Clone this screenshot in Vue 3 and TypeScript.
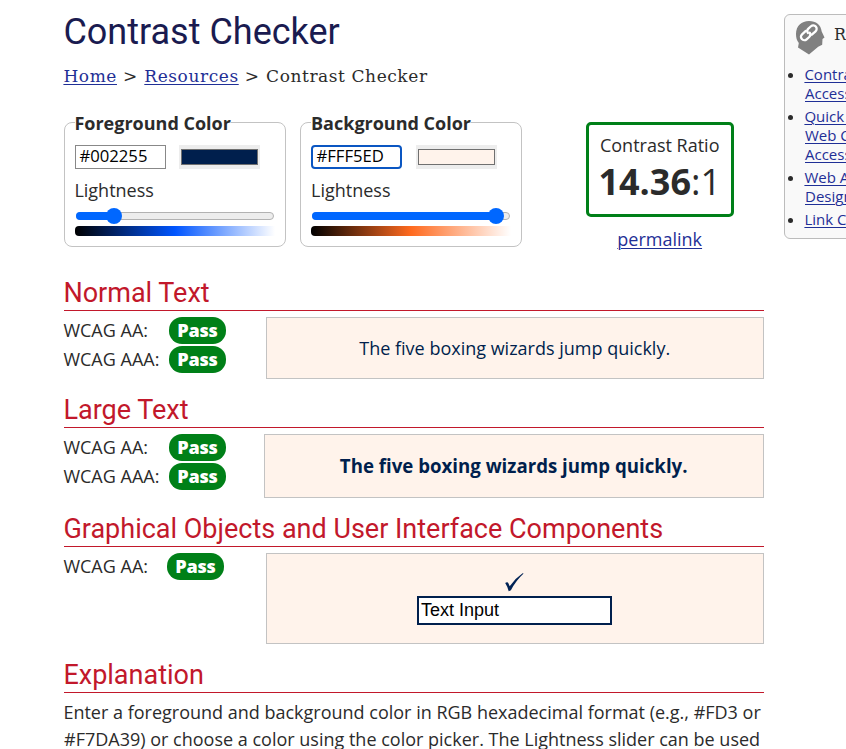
<script setup lang="ts">
import { ref } from 'vue'

interface Picker {
  id: string
  label: string
  value: string
  percent: number
}

const pickers = ref<Picker[]>([
  { id: 'fg', label: 'Foreground Color', value: '#002255', percent: 18.9 },
  { id: 'bg', label: 'Background Color', value: '#FFF5ED', percent: 93.2 },
])

const resources: string[][] = [
  ['Contrast and Color', 'Accessibility'],
  ['Quick Reference:', 'Web Content', 'Accessibility'],
  ['Web Accessibility for', 'Designers'],
  ['Link Contrast Checker'],
]
</script>

<template>
  <div class="page">
    <main>
      <h1>Contrast Checker</h1>
      <nav class="crumbs"><a href="#">Home</a><span>&gt;</span><a href="#">Resources</a><span>&gt;</span>Contrast Checker</nav>

      <div class="tools">
        <fieldset v-for="p in pickers" :key="p.id" :class="['picker', p.id]">
          <legend>{{ p.label }}</legend>
          <div class="row">
            <div class="hex">{{ p.value }}</div>
            <div class="well"><div class="swatch"></div></div>
          </div>
          <div class="light">Lightness</div>
          <div class="track">
            <div class="fill" :style="{ width: p.percent + '%' }"></div>
            <div class="thumb" :style="{ left: p.percent + '%' }"></div>
          </div>
          <div class="gradient"></div>
        </fieldset>
        <div class="result">
          <div class="ratio">
            <div class="caption">Contrast Ratio</div>
            <div class="number"><b>14.36</b>:1</div>
          </div>
          <a href="#">permalink</a>
        </div>
      </div>

      <h2>Normal Text</h2>
      <section class="normal">
        <div class="levels">
          <div><span>WCAG AA:</span><b>Pass</b></div>
          <div><span>WCAG AAA:</span><b>Pass</b></div>
        </div>
        <div class="sample">The five boxing wizards jump quickly.</div>
      </section>

      <h2>Large Text</h2>
      <section class="large">
        <div class="levels">
          <div><span>WCAG AA:</span><b>Pass</b></div>
          <div><span>WCAG AAA:</span><b>Pass</b></div>
        </div>
        <div class="sample">The five boxing wizards jump quickly.</div>
      </section>

      <h2>Graphical Objects and User Interface Components</h2>
      <section class="objects">
        <div class="levels">
          <div><span>WCAG AA:</span><b>Pass</b></div>
        </div>
        <div class="sample">
          <svg class="check" width="20" height="19" viewBox="0 0 20 19">
            <path d="M1.2 10 Q3.6 8.2 4.5 10.5 L5.7 13.2 Q11 5.5 18.6.3 L19.6.5 Q12 7.500 6.900 17.200 L4.700 18.200 Q3.400 13.400 1.200 10Z" fill="#002255" />
          </svg>
          <div class="field">Text Input</div>
        </div>
      </section>

      <h2>Explanation</h2>
      <p>Enter a foreground and background color in RGB hexadecimal format (e.g., #FD3 or<br />#F7DA39) or choose a color using the color picker. The Lightness slider can be used</p>
    </main>

    <aside>
      <div class="head">
        <svg width="30" height="36" viewBox="0 0 30 36">
          <path d="M1 14C1 6 6.500 1 14 1c7 0 12 4 12.700 10.500L29.500 17.500l-2 1.500-.3 5.800-4 2L14 34.500 3 27.500 3.800 23C1.800 20.500 1 17.500 1 14Z" fill="#808080" />
          <g transform="translate(13.800 12.800) rotate(-42)" fill="none" stroke="#fff" stroke-width="2.300" stroke-linecap="round">
            <path d="M-1-3.400H-6a3.400 3.400 0 0 0 0 6.800H-2.500A3.400 3.400 0 0 0 .8.500" />
            <path d="M1 3.400H6a3.400 3.400 0 0 0 0-6.800H2.500A3.400 3.400 0 0 0-.8-.5" />
          </g>
        </svg>
        <h3>Resources</h3>
      </div>
      <ul>
        <li v-for="(item, i) in resources" :key="i">
          <a href="#"><template v-for="(line, j) in item" :key="j"><br v-if="j" />{{ line }}</template></a>
        </li>
      </ul>
    </aside>
  </div>
</template>

<style>
body { background: #fff; overflow: hidden; }
</style>

<style scoped>
* { box-sizing: border-box; }
.page { display: flex; width: 846px; height: 749px; overflow: hidden; font: 18px/27px "Open Sans", sans-serif; color: #2b2b2b; }
a { color: #1f2f96; text-decoration: underline; text-decoration-thickness: 1px; text-underline-offset: 2px; }
main { flex: none; width: 700px; margin-left: 64px; white-space: nowrap; text-indent: -0.600px; }
h1 { margin: 10px 0 0; font: 400 36px/44px Roboto, sans-serif; color: #1a1b50; }
.crumbs { height: 24px; margin-top: 10px; font: 17px/24px "DejaVu Serif", serif; letter-spacing: 0.580px; }
.crumbs span { margin: 0 6.500px 0 6px; }
.tools { display: flex; height: 137px; margin-top: 22px; }
.picker { flex: none; width: 222px; height: 137px; margin: 0 14px 0 0; padding: 0 10px; border: 1px solid #c3c3c3; border-radius: 8px; }
legend { padding: 2px 0 0; font-weight: 700; line-height: 23px; }
.bg legend { text-indent: 0; }
.row { display: flex; gap: 13px; margin-top: 10px; }
.bg .row { gap: 14px; }
.hex { width: 91px; height: 24px; padding-left: 4px; border: 1px solid #888; font-size: 16.700px; line-height: 20px; color: #000; }
.bg .hex { border: 2px solid #0a56c2; border-radius: 4px; padding-left: 4px; line-height: 18px; }
.well { width: 81px; height: 24px; padding: 4px 2px; background: #ededed; }
.swatch { height: 16px; border: 1px solid #707070; background: #001f4d; }
.bg .swatch { background: #fff3eb; }
.light { margin-top: 8px; line-height: 27px; }
.bg .light { text-indent: 0; }
.track { position: relative; width: 198px; height: 8px; margin: 8px 0 0 1px; border: 1px solid #b2b2b2; border-radius: 4px; background: #ededed; }
.fill { height: 8px; margin: -1px; border-radius: 4px; background: #0067ff; }
.thumb { position: absolute; top: -5px; width: 16px; height: 16px; margin-left: -8px; border-radius: 50%; background: #0067ff; }
.gradient { width: 200px; height: 10px; margin-top: 6px; border-radius: 4px 0 0 4px; background: linear-gradient(90deg, #000, #0055ff 50%, #fff); }
.bg .gradient { background: linear-gradient(90deg, #000, #ff6a1f 50%, #fff); }
.result { width: 148px; margin: 12px 0 0 50px; text-align: center; }
.ratio { height: 95px; padding-top: 7px; border: 3px solid #008018; border-radius: 5px; }
.number { font-size: 36px; line-height: 46px; }
.result > a { display: block; margin-top: 9px; }
h2 { margin: 0; height: 32px; border-bottom: 1px solid #c2182b; font: 400 27px/28px Roboto, sans-serif; color: #c2182b; }
.tools + h2 { margin-top: 32px; }
section { display: flex; justify-content: space-between; margin-top: 6px; }
.levels { display: flex; flex-direction: column; gap: 2px; }
.levels > div { display: flex; height: 27px; }
.levels span { width: 105px; }
.objects .levels span { width: 103px; }
.levels b { width: 57px; border-radius: 13px; background: #008018; color: #fff; font-weight: 800; letter-spacing: -0.200px; text-align: center; text-indent: 0; }
.sample { display: flex; align-items: center; justify-content: center; width: 498px; height: 62px; border: 1px solid #c3c3c3; background: #fff3eb; color: #001f4d; }
.normal { height: 79px; }
.large { height: 81px; }
.large .sample { width: 500px; height: 64px; padding-bottom: 1px; font-weight: 700; font-size: 18.670px; }
.objects { height: 108px; }
.objects .sample { flex-direction: column; justify-content: flex-start; height: 91px; padding: 19px 2px 0 0; }
.check { flex: none; }
.field { width: 195px; height: 29px; margin-top: 4px; padding-left: 3px; border: 2px solid #001f4d; background: #fff; color: #000; font: 18px/25px "Liberation Sans", sans-serif; }
p { margin: 6px 0 0; }
aside { flex: none; width: 210px; height: 225px; margin: 14px 0 0 20px; border: 1px solid #bcbcbc; border-radius: 6px; background: #f9f9f9; white-space: nowrap; }
.head { display: flex; height: 50px; padding: 5px 0 0 10px; gap: 9px; }
h3 { margin: 0; font: 400 16px/30px "DejaVu Serif", serif; }
ul { margin: 0; padding: 0 0 0 20px; font-size: 15px; line-height: 19px; text-indent: -0.600px; }
li { margin-bottom: 4px; }
</style>
